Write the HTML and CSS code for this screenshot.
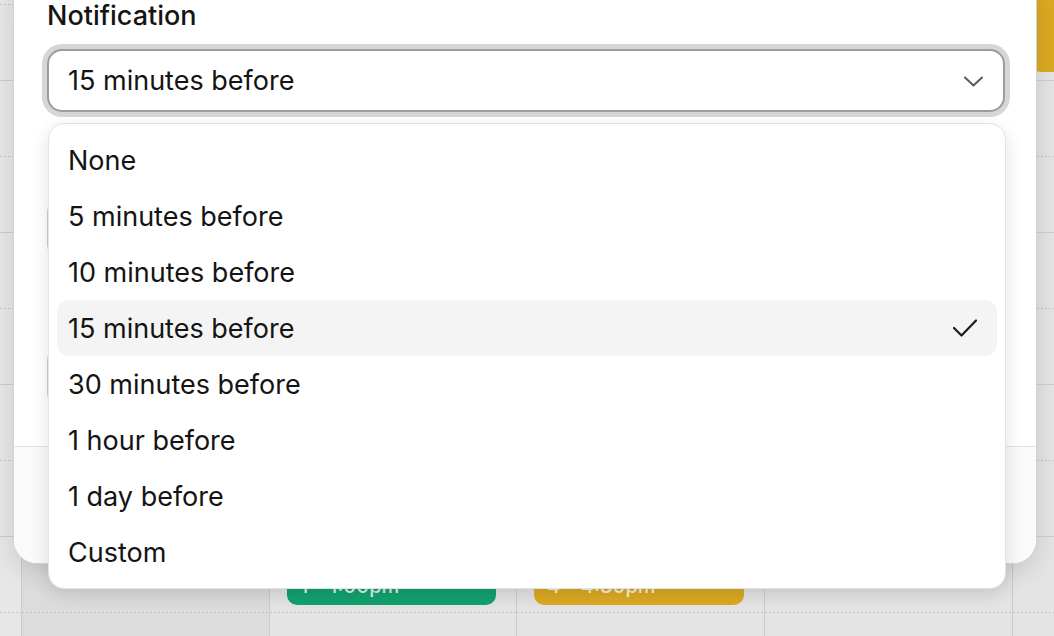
FILE: index.html
```html
<!DOCTYPE html>
<html lang="en">
<head>
    <meta charset="UTF-8">
    <meta name="viewport" content="width=device-width, initial-scale=1.0">
    <title>Edit Event</title>
    <link rel="stylesheet" href="styles.css">
</head>
<body>
    <!-- week grid behind the dialog -->
    <div class="calendar">
        <div class="day gutter">
            <div class="hour"></div><div class="hour"></div><div class="hour"></div><div class="hour"></div><div class="hour"></div>
        </div>
        <div class="day past">
            <div class="hour"></div><div class="hour"></div><div class="hour"></div><div class="hour"></div><div class="hour"></div>
        </div>
        <div class="day">
            <div class="hour"></div><div class="hour"></div><div class="hour"></div><div class="hour"></div><div class="hour"></div>
            <div class="event green">
                <div class="event-title">Lunch with Sam</div>
                <div class="event-time">1 – 1:00pm</div>
            </div>
        </div>
        <div class="day">
            <div class="hour"></div><div class="hour"></div><div class="hour"></div><div class="hour"></div><div class="hour"></div>
            <div class="event yellow">
                <div class="event-title">Design review</div>
                <div class="event-time">4 – 4:30pm</div>
            </div>
        </div>
        <div class="day">
            <div class="hour"></div><div class="hour"></div><div class="hour"></div><div class="hour"></div><div class="hour"></div>
        </div>
        <div class="day">
            <div class="hour"></div><div class="hour"></div><div class="hour"></div><div class="hour"></div><div class="hour"></div>
            <div class="event yellow early"></div>
        </div>
    </div>

    <!-- event dialog -->
    <div class="modal">
        <div class="modal-body">
            <div class="field">
                <div class="field-label">Notification</div>
                <div class="select">
                    <span>15 minutes before</span>
                    <svg class="chevron" width="20" height="12" viewBox="0 0 20 12">
                        <path d="M2 2.5 L10.5 10.5 L19 2.5" fill="none" stroke="#5a5a5a" stroke-width="2" stroke-linecap="round" stroke-linejoin="round"/>
                    </svg>
                </div>
                <ul class="menu">
                    <li>None</li>
                    <li>5 minutes before</li>
                    <li>10 minutes before</li>
                    <li class="selected">
                        <span>15 minutes before</span>
                        <svg width="24" height="18" viewBox="0 0 24 18">
                            <path d="M1 9 L8.5 16.5 L23 1.5" fill="none" stroke="#1c1c1c" stroke-width="2.2" stroke-linecap="round" stroke-linejoin="round"/>
                        </svg>
                    </li>
                    <li>30 minutes before</li>
                    <li>1 hour before</li>
                    <li>1 day before</li>
                    <li>Custom</li>
                </ul>
            </div>
            <div class="field">
                <div class="field-label">Color</div>
                <div class="input"></div>
            </div>
            <div class="field">
                <div class="field-label hidden-label"></div>
                <div class="input"></div>
            </div>
        </div>
        <div class="modal-footer">
            <button class="btn">Cancel</button>
            <button class="btn primary">Save</button>
        </div>
    </div>
</body>
</html>
```

FILE: styles.css
```css
html, body {
    overflow: hidden;
}
body {
    margin: 0;
    height: 636px;
    position: relative;
    font-family: Inter, "Noto Sans", sans-serif;
    color: #141414;
    background-color: #e4e4e4;
}

/* calendar grid */
.calendar {
    display: grid;
    grid-template-columns: 21px 248px 247px 248px 248px 248px;
    width: 1260px;
    margin-top: -71px;
}
.day {
    position: relative;
    border-left: 1px solid #cbcbcb;
    background-color: #e4e4e4;
}
.day.gutter {
    border-left: none;
    background-color: #e7e7e7;
}
.day.past {
    background-color: #dcdcdc;
}
.hour {
    position: relative;
    height: 152px;
    box-sizing: border-box;
    border-bottom: 1px solid #cdcdcd;
}
.hour::before {
    content: "";
    position: absolute;
    left: 0;
    right: 0;
    top: 75px;
    height: 1px;
    background: linear-gradient(to right, #c3c3c3 50%, transparent 50%) 0 0 / 4px 1px repeat-x;
}
.event {
    position: absolute;
    left: 17px;
    right: 20px;
    top: 611px;
    height: 65px;
    box-sizing: border-box;
    padding: 10px 13px 7px;
    border-radius: 10px;
    color: rgba(255, 255, 255, 0.85);
    font-size: 20px;
    line-height: 24px;
    font-weight: 500;
    overflow: hidden;
    white-space: nowrap;
}
.event.green {
    background-color: #12a26f;
}
.event.yellow {
    background-color: #dcaa22;
}
.event.early {
    top: 0;
    height: 143px;
    border-radius: 0 0 10px 10px;
}

/* dialog */
.modal {
    position: absolute;
    left: 13px;
    top: -25px;
    width: 1024px;
    box-sizing: border-box;
    background-color: #fff;
    border: 1px solid #d3d3d3;
    border-radius: 24px;
    box-shadow: 0 8px 24px rgba(0, 0, 0, 0.12);
    z-index: 2;
}
.modal-body {
    display: flex;
    flex-direction: column;
    gap: 36px;
    padding: 24px 31px 38px 33px;
}
.field {
    position: relative;
    display: flex;
    flex-direction: column;
    gap: 17px;
}
.field-label {
    height: 32px;
    font-size: 27px;
    line-height: 32px;
    font-weight: 500;
}
.select, .input {
    height: 63px;
    box-sizing: border-box;
    display: flex;
    align-items: center;
    border-radius: 15px;
    font-size: 27px;
    background-color: #fff;
}
.select {
    justify-content: space-between;
    padding: 0 20px 0 19px;
    border: 2px solid #9c9c9c;
    box-shadow: 0 0 0 5px #d6d6d6;
}
.input {
    padding: 0 19px;
    border: 1.5px solid #cfcfcf;
}
.modal-footer {
    height: 117px;
    box-sizing: border-box;
    display: flex;
    align-items: center;
    justify-content: flex-end;
    gap: 12px;
    padding: 0 33px;
    background-color: #fafafa;
    border-top: 1px solid #e3e3e3;
    border-radius: 0 0 23px 23px;
}
.btn {
    height: 56px;
    padding: 0 28px;
    font-family: inherit;
    font-size: 22px;
    border: 1px solid #ccc;
    border-radius: 14px;
    background-color: #fff;
}
.btn.primary {
    background-color: #111;
    color: #fff;
    border: none;
}

/* dropdown menu */
.menu {
    position: absolute;
    top: 123px;
    left: 1px;
    right: -1px;
    margin: 0;
    padding: 8px;
    list-style: none;
    background-color: #fff;
    border: 1px solid #e2e2e2;
    border-radius: 16px;
    box-shadow: 0 6px 18px rgba(0, 0, 0, 0.12);
    z-index: 3;
}
.menu li {
    height: 56px;
    display: flex;
    align-items: center;
    justify-content: space-between;
    padding: 0 20px 0 11px;
    border-radius: 12px;
    font-size: 27px;
}
.menu li.selected {
    background-color: #f4f4f4;
}
```
